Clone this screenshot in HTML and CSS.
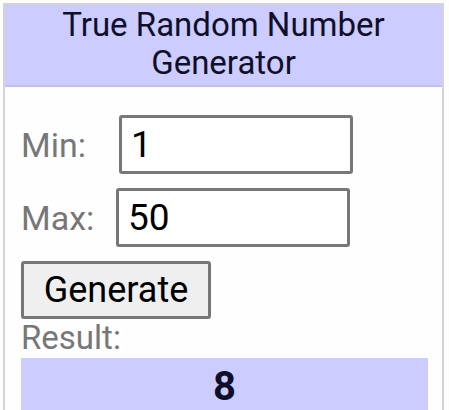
FILE: index.html
```html
<!DOCTYPE html>
<html>
<head>
    <meta charset="UTF-8">
    <link rel="stylesheet" href="styles.css">
</head>
<body>
    <div class="widget">
        <div class="title">True Random Number Generator</div>
        <div class="content">
            <div class="row row-min">
                <label class="lbl" for="min">Min:</label>
                <input class="num" id="min" type="text" value="1">
            </div>
            <div class="row row-max">
                <label class="lbl" for="max">Max:</label>
                <input class="num" id="max" type="text" value="50">
            </div>
            <button class="gen">Generate</button>
            <div class="res-label">Result:</div>
            <div class="result">8</div>
        </div>
    </div>
</body>
</html>
```

FILE: styles.css
```css
body { margin: 0; background: #fdfdfb; font-family: Roboto, "Liberation Sans", sans-serif; }
.widget { margin: 3px 0 0 3px; width: 437px; border: 2px solid #d4d4d8; border-bottom: none; background: #fefefe; }
.title { background: #ccccff; color: #0f0f2a; font-size: 33px; line-height: 38px; text-align: center; padding: 1px 10px 3px; border-bottom: 2px solid #c0c0f0; }
.content { padding: 28px 14px 0 16px; }
.row { display: flex; align-items: center; margin-bottom: 14px; height: 59px; }
.lbl { color: #777; font-size: 34px; line-height: 40px; }
.row-min .lbl { width: 98px; }
.row-max .lbl { width: 95px; }
.num { width: 219px; height: 53px; box-sizing: content-box; padding: 0 0 0 9px; margin: 0; border: 3px solid #777; border-radius: 3px; font-family: Roboto, sans-serif; font-size: 37px; color: #000; background: #fff; outline: none; }
.gen { display: block; width: 190px; height: 58px; margin: 1px 0 0 0; padding: 0; border: 3px solid #777; border-radius: 3px; background: #efefef; font-family: Roboto, sans-serif; font-size: 36px; color: #000; }
.res-label { color: #777; font-size: 33px; line-height: 38px; }
.result { background: #ccccff; margin-top: 1px; height: 60px; text-align: center; font-size: 40px; font-weight: bold; line-height: 58px; color: #0f0f2a; }
```
